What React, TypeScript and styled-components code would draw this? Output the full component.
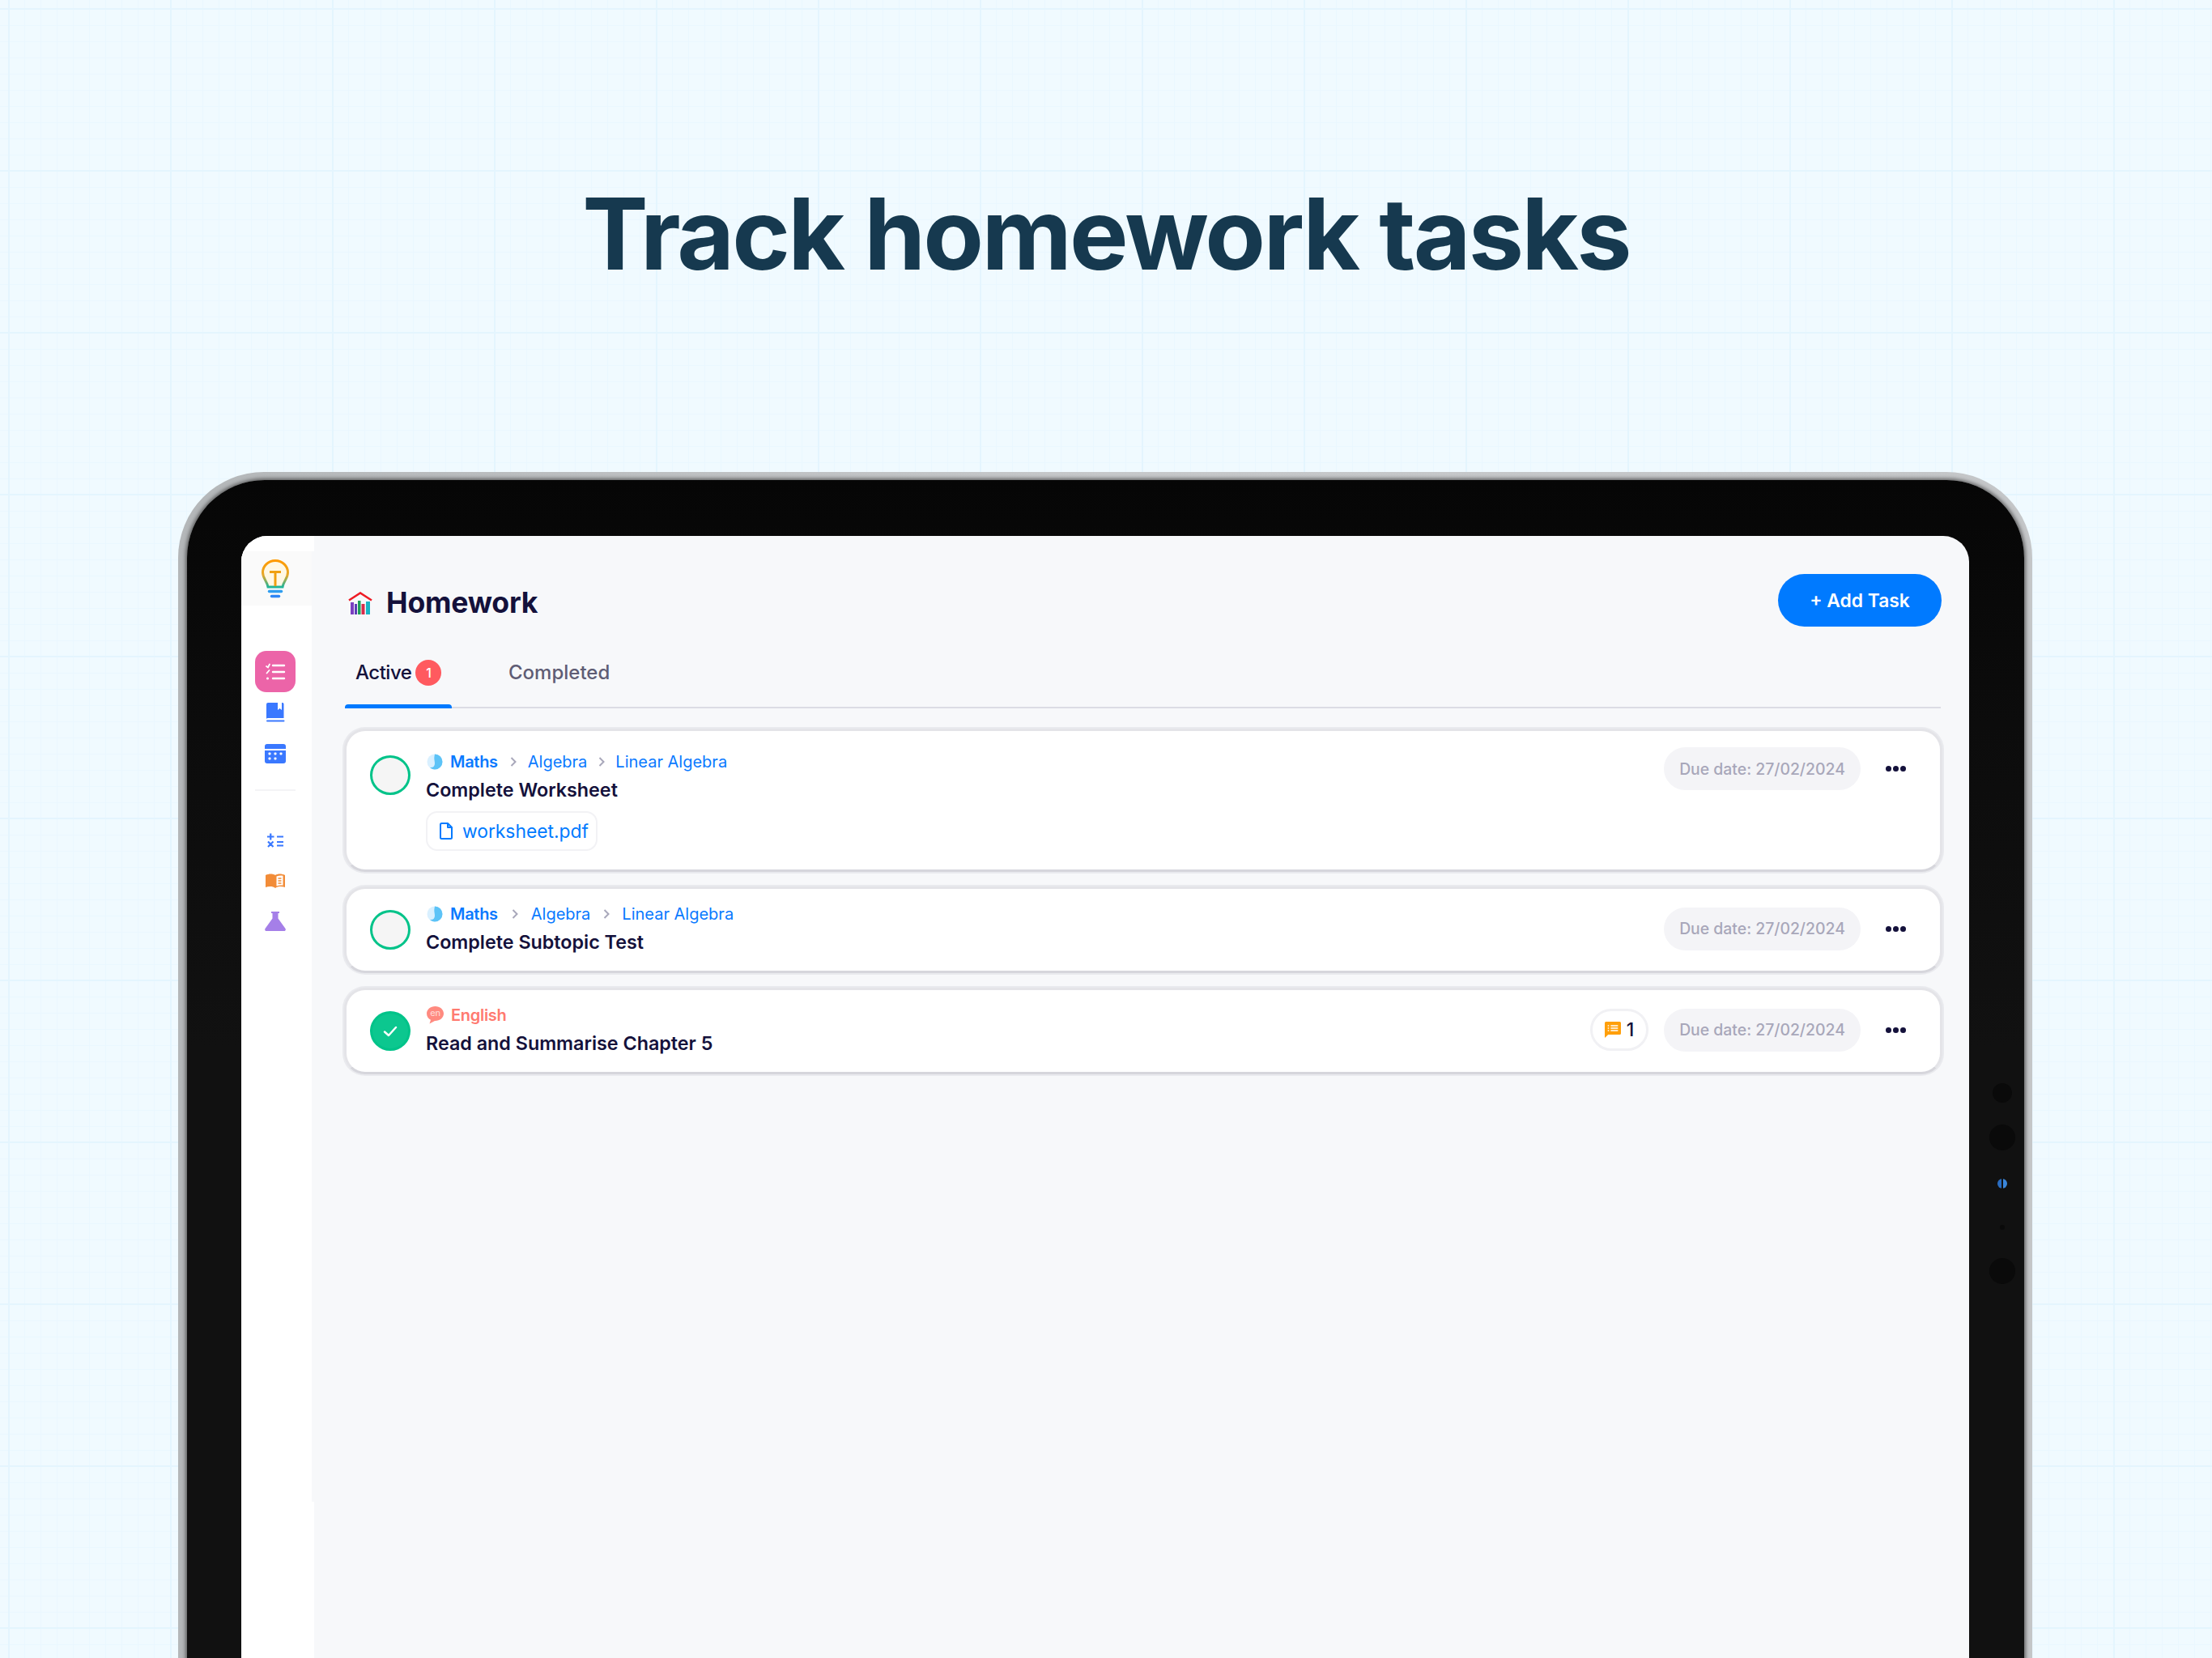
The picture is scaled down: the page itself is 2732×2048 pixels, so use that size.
import React from "react";
import styled, { createGlobalStyle } from "styled-components";

const GlobalStyle = createGlobalStyle`
  html, body {
    margin: 0;
    padding: 0;
    background: #f0faff;
  }
  * {
    box-sizing: border-box;
  }
`;

const Page = styled.div`
  width: 2732px;
  height: 2048px;
  overflow: hidden;
  display: flex;
  flex-direction: column;
  font-family: "Inter", "Liberation Sans", sans-serif;
  background-color: #f0faff;
  background-image:
    linear-gradient(to right, #e4f5fe 2px, transparent 2px),
    linear-gradient(to bottom, #e4f5fe 2px, transparent 2px),
    linear-gradient(to right, #eaf7ff 1px, transparent 1px),
    linear-gradient(to bottom, #eaf7ff 1px, transparent 1px);
  background-size: 200px 200px, 200px 200px, 20px 20px, 20px 20px;
  background-position: 10px 10px, 10px 10px, 10px 11px, 10px 11px;
`;

const Hero = styled.header`
  height: 583px;
  flex: none;
  display: flex;
  justify-content: center;
  padding-top: 214px;
`;

const Headline = styled.h1`
  margin: 0;
  font-family: "Inter", "Lato", sans-serif;
  font-size: 122px;
  line-height: 150px;
  font-weight: 700;
  letter-spacing: -2.8px;
  color: #16394f;
`;

const Device = styled.div`
  flex: none;
  width: 2290px;
  height: 1700px;
  margin-left: 220px;
  padding: 10px 10px 0 11px;
  border-radius: 106px 106px 0 0;
  background: linear-gradient(to right, #b4b7b9, #c6c8ca 50%, #c4c6c8);
  display: flex;
`;

const Bezel = styled.div`
  position: relative;
  flex: 1;
  padding: 69px 68px 0 67px;
  border-radius: 96px 96px 0 0;
  background: linear-gradient(to bottom, #060606 0, #0c0c0c 300px, #111 700px);
  box-shadow: 0 0 4px 2px rgba(70, 70, 70, 0.75);
  display: flex;
`;

const Sensor = styled.span<{ $top: number; $size: number; $blue?: boolean }>`
  position: absolute;
  right: ${(p) => 27 - p.$size / 2}px;
  top: ${(p) => p.$top - p.$size / 2}px;
  width: ${(p) => p.$size}px;
  height: ${(p) => p.$size}px;
  border-radius: 50%;
  background: ${(p) =>
    p.$blue
      ? "linear-gradient(to right, #2a6cc0 0 40%, #111 40% 55%, #3a86da 55% 100%)"
      : "#0a0a0a"};
`;

const Screen = styled.div`
  flex: 1;
  display: flex;
  border-radius: 32px 32px 0 0;
  overflow: hidden;
  background: #f7f8fa;
`;

const Sidebar = styled.nav`
  position: relative;
  flex: none;
  width: 90px;
  background: #fff;
  display: flex;
  flex-direction: column;
  align-items: flex-start;
  padding-top: 19px;

  &::after {
    content: "";
    position: absolute;
    right: 0;
    top: 19px;
    width: 3px;
    height: 1174px;
    background: #f7f8fa;
  }
`;

const LogoArea = styled.div`
  width: 87px;
  height: 67px;
  flex: none;
  background: #fafafa;
  display: flex;
  justify-content: center;
  padding: 10px 3px 0 0;
`;

const NavGroup = styled.div`
  width: 84px;
  display: flex;
  flex-direction: column;
  align-items: center;
`;

const NavSlot = styled.div<{ $active?: boolean; $gap?: number }>`
  width: 50px;
  height: ${(p) => (p.$active ? 51 : 26)}px;
  margin-top: ${(p) => p.$gap ?? 0}px;
  border-radius: 14px;
  background: ${(p) => (p.$active ? "#ec64a8" : "transparent")};
  display: flex;
  align-items: center;
  justify-content: center;
`;

const NavDivider = styled.hr`
  width: 50px;
  height: 2px;
  border: 0;
  margin: 31px 0 0;
  background: #f4f4f6;
`;

const Main = styled.main`
  flex: 1;
  min-width: 0;
  display: flex;
  flex-direction: column;
  padding: 47px 34px 0 38px;
`;

const HeaderRow = styled.div`
  display: flex;
  align-items: flex-start;
  justify-content: space-between;
  height: 65px;
`;

const PageTitle = styled.div`
  display: flex;
  align-items: center;
  gap: 17px;
  margin: 17px 0 0 4px;
  height: 38px;
`;

const TitleText = styled.h2`
  margin: 0;
  font-size: 35.6px;
  line-height: 38px;
  font-weight: 700;
  letter-spacing: -0.2px;
  color: #14113b;
`;

const AddButton = styled.button`
  width: 202px;
  height: 65px;
  border: 0;
  border-radius: 33px;
  background: #007aff;
  color: #fff;
  font-family: inherit;
  font-size: 22.8px;
  font-weight: 600;
`;

const Tabs = styled.div`
  display: flex;
  height: 101px;
  margin-right: 1px;
  border-bottom: 2px solid #dcdce4;
`;

const Tab = styled.div<{ $active?: boolean }>`
  position: relative;
  display: flex;
  align-items: center;
  gap: 5px;
  height: 101px;
  padding: 12px 0 0 13px;
  margin-left: ${(p) => (p.$active ? 0 : 57)}px;
  width: ${(p) => (p.$active ? "132px" : "auto")};
  font-size: 24px;
  font-weight: 500;
  letter-spacing: ${(p) => (p.$active ? "-0.5px" : "0")};
  color: ${(p) => (p.$active ? "#14113b" : "#5f5d75")};

  &::after {
    content: "";
    display: ${(p) => (p.$active ? "block" : "none")};
    position: absolute;
    left: 0;
    right: 0;
    bottom: 0;
    height: 5px;
    border-radius: 4px 4px 0 0;
    background: #007aff;
  }
`;

const Badge = styled.span`
  width: 32px;
  height: 32px;
  border-radius: 50%;
  background: #ff5a5f;
  color: #fff;
  font-size: 16px;
  font-weight: 500;
  display: flex;
  align-items: center;
  justify-content: center;
`;

const TaskList = styled.div`
  display: flex;
  flex-direction: column;
  gap: 18px;
  margin: 25px -1px 0 -1px;
`;

const Card = styled.article<{ $tall?: boolean }>`
  display: flex;
  align-items: ${(p) => (p.$tall ? "flex-start" : "center")};
  gap: 19px;
  padding: 0 42px 0 29px;
  background: #fff;
  border: 3px solid #e4e4e8;
  border-bottom-color: #d6d6dc;
  border-radius: 26px;
  box-shadow: 0 0 0 2px rgba(222, 222, 228, 0.55);
`;

const Check = styled.span<{ $done?: boolean; $tall?: boolean }>`
  flex: none;
  width: 50px;
  height: 49px;
  margin-top: ${(p) => (p.$tall ? 30 : 0)}px;
  border-radius: 50%;
  border: 3px solid #00c389;
  background: ${(p) => (p.$done ? "#0cc78f" : "#f5f5f5")};
  display: flex;
  align-items: center;
  justify-content: center;
`;

const Body = styled.div<{ $tall?: boolean }>`
  flex: 1;
  min-width: 0;
  padding: ${(p) => (p.$tall ? "23px 0" : "16px 0 15px")};
`;

const Crumbs = styled.div<{ $gap: number; $color: string }>`
  display: flex;
  align-items: center;
  height: 30px;
  gap: ${(p) => p.$gap}px;
  font-size: 20px;
  color: ${(p) => p.$color};
`;

const Subject = styled.span`
  display: flex;
  align-items: center;
  gap: 9px;
  margin-left: 1px;
  font-weight: 600;
  letter-spacing: -0.3px;
  margin-right: 2px;
`;

const TaskTitle = styled.h3`
  margin: 0;
  height: 40px;
  font-size: 23.3px;
  line-height: 40px;
  font-weight: 600;
  color: #14113b;
`;

const FileChip = styled.div`
  display: inline-flex;
  align-items: center;
  gap: 12px;
  height: 49px;
  width: 212px;
  margin-top: 6px;
  padding: 0 0 0 15px;
  border: 2px solid #f2f2f5;
  border-radius: 14px;
  font-size: 22.8px;
  color: #007aff;
`;

const Trailing = styled.div<{ $tall?: boolean }>`
  flex: none;
  display: flex;
  align-items: center;
  margin: ${(p) => (p.$tall ? "20px 0 0" : "0 0 3px")};
`;

const CommentPill = styled.div`
  width: 72px;
  height: 52px;
  margin-right: 19px;
  border: 3px solid #f1f1f4;
  border-radius: 26px;
  display: flex;
  align-items: center;
  justify-content: center;
  gap: 7px;
  font-size: 23px;
  font-weight: 500;
  color: #14113b;
`;

const DuePill = styled.div`
  width: 243px;
  height: 53px;
  border-radius: 27px;
  background: #f4f4f7;
  color: #a8a7ba;
  font-size: 19.4px;
  font-weight: 500;
  display: flex;
  align-items: center;
  justify-content: center;
`;

const Dots = styled.div`
  display: flex;
  gap: 2px;
  margin-left: 31px;

  span {
    width: 7px;
    height: 7px;
    border-radius: 50%;
    background: #14113b;
  }
`;

const MoreDots = () => (
  <Dots>
    <span />
    <span />
    <span />
  </Dots>
);

const LogoIcon = () => (
  <svg width="34" height="48" viewBox="0 0 34 48" fill="none">
    <defs>
      <linearGradient id="bulb" x1="0" y1="0" x2="0" y2="1">
        <stop offset="0" stopColor="#ff9a00" />
        <stop offset="0.55" stopColor="#e6a82a" />
        <stop offset="1" stopColor="#1fb59a" />
      </linearGradient>
    </defs>
    <path
      d="M17 1.500C8.200 1.500 1.500 8.200 1.500 16c0 7.500 5 10 6.500 18h18c1.500-8 6.500-10.500 6.500-18C32.500 8.200 25.800 1.500 17 1.500Z"
      fill="#fff8e4"
      stroke="url(#bulb)"
      strokeWidth="3"
    />
    <path d="M10 15.500h14M17 15.500V33" stroke="#f0a010" strokeWidth="3" />
    <path d="M9.500 39.500h15" stroke="#2f9df0" strokeWidth="3.500" strokeLinecap="round" />
    <path d="M12.500 45.500h9" stroke="#2f86f5" strokeWidth="3.500" strokeLinecap="round" />
  </svg>
);

const HomeworkIcon = () => (
  <svg width="30" height="29" viewBox="0 0 30 29" fill="none">
    <path d="M1 10.500 15 1.500l14 9" stroke="#ee1c25" strokeWidth="2.600" />
    <rect x="3" y="13" width="4" height="15" fill="#7a3fc0" />
    <rect x="8" y="15" width="3" height="13" fill="#5b3fb5" />
    <rect x="12" y="11" width="3.500" height="17" fill="#1f9e5a" />
    <rect x="16.500" y="15" width="4" height="13" fill="#d92b4a" />
    <rect x="22" y="12" width="5" height="16" fill="#18b4c4" />
  </svg>
);

const ListIcon = () => (
  <svg width="26" height="22" viewBox="0 0 26 22" fill="none" stroke="#fff" strokeLinecap="round">
    <path d="M10 3h14M10 11h14M10 19h14" strokeWidth="2.400" />
    <path d="M2 4l2 1.500L6 1.500M2.500 12.500 5.500 9" strokeWidth="1.800" />
    <circle cx="3.500" cy="19" r="1.500" fill="#fff" stroke="none" />
  </svg>
);

const BookIcon = () => (
  <svg width="24" height="24" viewBox="0 0 24 24">
    <path d="M3 0h18a1.500 1.500 0 0 1 1.500 1.500V19H3a2 2 0 0 0-2 1V2a2 2 0 0 1 2-2Z" fill="#3a78ff" />
    <path d="M15 0h5v9l-2.500-2L15 9Z" fill="#fff" />
    <path d="M2 22.500h20.500" stroke="#3a78ff" strokeWidth="2" strokeLinecap="round" />
  </svg>
);

const CalendarIcon = () => (
  <svg width="26" height="24" viewBox="0 0 26 24">
    <path d="M3 0h20a3 3 0 0 1 3 3v3H0V3a3 3 0 0 1 3-3Z" fill="#3a78ff" />
    <path d="M0 8h26v13a3 3 0 0 1-3 3H3a3 3 0 0 1-3-3Z" fill="#3a78ff" />
    {[6, 13, 20].map((x) => (
      <rect key={x} x={x - 1.5} y="10.500" width="3" height="3" rx="1" fill="#fff" />
    ))}
    {[6, 13].map((x) => (
      <rect key={x} x={x - 1.5} y="16.500" width="3" height="3" rx="1" fill="#fff" />
    ))}
  </svg>
);

const MathIcon = () => (
  <svg width="20" height="18" viewBox="0 0 20 18" fill="none" stroke="#3a78ff" strokeWidth="2.200">
    <path d="M0 4.500h8.500M4.250.500v8M12 4.500h8" />
    <path d="M1 10.500l6.500 6.500M7.500 10.500 1 17M12 11h8M12 15.500h8" />
  </svg>
);

const OpenBookIcon = () => (
  <svg width="24" height="18" viewBox="0 0 24 18">
    <path d="M0 2c4-2 9-2 12 0 3-2 8-2 12 0v15c-4-1.500-9-1.500-12 1-3-2.500-8-2.500-12-1Z" fill="#f28c38" />
    <path d="M13.500 3.500c2.500-1 5-1.200 8-.8v12c-3-.3-5.500 0-8 .8Z" fill="#fff" />
    <path d="M15.500 6h4M15.500 9h4M15.500 12h4" stroke="#f28c38" strokeWidth="1.300" />
  </svg>
);

const FlaskIcon = () => (
  <svg width="26" height="24" viewBox="0 0 26 24">
    <path d="M8 0h10v2h-1.500v6.500L25.500 21c.8 1.500 0 3-1.500 3H2c-1.500 0-2.300-1.500-1.500-3l9-12.500V2H8Z" fill="#a57fe8" />
  </svg>
);

const MathsBadge = () => (
  <svg width="20" height="20" viewBox="0 0 20 20">
    <circle cx="10" cy="10" r="9.500" fill="#d9f0ff" />
    <path d="M10 .500a9.500 9.500 0 0 1 0 19c-2.500 0-4.500-1-6-2.500 4 .500 6-1.500 6-5 0-4-1.500-5 0-11.500Z" fill="#5cc3f7" />
  </svg>
);

const EnglishBadge = () => (
  <svg width="21" height="22" viewBox="0 0 21 22">
    <path d="M10.500 0C4.700 0 0 3.900 0 9c0 3.600 2 6.400 5 7.800L3.500 21.500 10 18h.5C16.300 18 21 14.100 21 9S16.300 0 10.500 0Z" fill="#ff8a80" />
    <text x="10.500" y="12" textAnchor="middle" fontFamily="Inter, sans-serif" fontSize="11" fontWeight="500" fill="#ffd5d0">
      en
    </text>
  </svg>
);

const Chevron = () => (
  <svg width="8" height="12" viewBox="0 0 8 12" fill="none" stroke="#a8a7ba" strokeWidth="2">
    <path d="M1.500 1l5 5-5 5" />
  </svg>
);

const FileIcon = () => (
  <svg width="16" height="21" viewBox="0 0 16 21" fill="none" stroke="#007aff" strokeWidth="2" strokeLinejoin="round">
    <path d="M1 2.500A1.500 1.500 0 0 1 2.500 1H10l5 5v12.500a1.500 1.500 0 0 1-1.500 1.500h-11A1.500 1.500 0 0 1 1 18.500Z" />
    <path d="M10 1v5h5" />
  </svg>
);

const TickIcon = () => (
  <svg width="18" height="14" viewBox="0 0 18 14" fill="none" stroke="#fff" strokeWidth="2.400" strokeLinecap="round" strokeLinejoin="round">
    <path d="M2 7.500l5 4.500 9-10" />
  </svg>
);

const CommentIcon = () => (
  <svg width="20" height="20" viewBox="0 0 19 20" preserveAspectRatio="none">
    <path d="M1.500 0h16A1.500 1.500 0 0 1 19 1.500v13a1.500 1.500 0 0 1-1.500 1.500H4L0 20V1.500A1.500 1.500 0 0 1 1.500 0Z" fill="#ff9f0a" />
    <path d="M7 5h8.500M7 8h8.500M7 11h8.500" stroke="#fff" strokeWidth="1.600" />
    <path d="M3.500 5h1.500M3.500 8h1.500M3.500 11h1.500" stroke="#fff" strokeWidth="1.600" />
  </svg>
);

interface Task {
  title: string;
  subject: string;
  color: string;
  gap: number;
  topics: string[];
  file?: string;
  done?: boolean;
  comments?: number;
}

const tasks: Task[] = [
  {
    title: "Complete Worksheet",
    subject: "Maths",
    color: "#0a7aff",
    gap: 13.5,
    topics: ["Algebra", "Linear Algebra"],
    file: "worksheet.pdf",
  },
  {
    title: "Complete Subtopic Test",
    subject: "Maths",
    color: "#0a7aff",
    gap: 15.5,
    topics: ["Algebra", "Linear Algebra"],
  },
  {
    title: "Read and Summarise Chapter 5",
    subject: "English",
    color: "#ff7a70",
    gap: 12,
    topics: [],
    done: true,
    comments: 1,
  },
];

export default function App() {
  return (
    <Page>
      <GlobalStyle />
      <Hero>
        <Headline>Track homework tasks</Headline>
      </Hero>
      <Device>
        <Bezel>
          <Sensor $top={757} $size={24} />
          <Sensor $top={812} $size={32} />
          <Sensor $top={869} $size={12} $blue />
          <Sensor $top={923} $size={6} />
          <Sensor $top={977} $size={32} />
          <Screen>
            <Sidebar>
              <LogoArea>
                <LogoIcon />
              </LogoArea>
              <NavGroup>
                <NavSlot $active $gap={56}>
                  <ListIcon />
                </NavSlot>
                <NavSlot $gap={12}>
                  <BookIcon />
                </NavSlot>
                <NavSlot $gap={25}>
                  <CalendarIcon />
                </NavSlot>
                <NavDivider />
                <NavSlot $gap={48}>
                  <MathIcon />
                </NavSlot>
                <NavSlot $gap={24}>
                  <OpenBookIcon />
                </NavSlot>
                <NavSlot $gap={24}>
                  <FlaskIcon />
                </NavSlot>
              </NavGroup>
            </Sidebar>
            <Main>
              <HeaderRow>
                <PageTitle>
                  <HomeworkIcon />
                  <TitleText>Homework</TitleText>
                </PageTitle>
                <AddButton>+ Add Task</AddButton>
              </HeaderRow>
              <Tabs>
                <Tab $active>
                  Active
                  <Badge>1</Badge>
                </Tab>
                <Tab>Completed</Tab>
              </Tabs>
              <TaskList>
                {tasks.map((task) => {
                  const tall = Boolean(task.file);
                  return (
                    <Card key={task.title} $tall={tall}>
                      <Check $done={task.done} $tall={tall}>
                        {task.done && <TickIcon />}
                      </Check>
                      <Body $tall={tall}>
                        <Crumbs $gap={task.gap} $color={task.color}>
                          <Subject>
                            {task.subject === "Maths" ? <MathsBadge /> : <EnglishBadge />}
                            {task.subject}
                          </Subject>
                          {task.topics.map((topic) => (
                            <React.Fragment key={topic}>
                              <Chevron />
                              <span>{topic}</span>
                            </React.Fragment>
                          ))}
                        </Crumbs>
                        <TaskTitle>{task.title}</TaskTitle>
                        {task.file && (
                          <FileChip>
                            <FileIcon />
                            {task.file}
                          </FileChip>
                        )}
                      </Body>
                      <Trailing $tall={tall}>
                        {task.comments && (
                          <CommentPill>
                            <CommentIcon />
                            {task.comments}
                          </CommentPill>
                        )}
                        <DuePill>Due date: 27/02/2024</DuePill>
                        <MoreDots />
                      </Trailing>
                    </Card>
                  );
                })}
              </TaskList>
            </Main>
          </Screen>
        </Bezel>
      </Device>
    </Page>
  );
}
